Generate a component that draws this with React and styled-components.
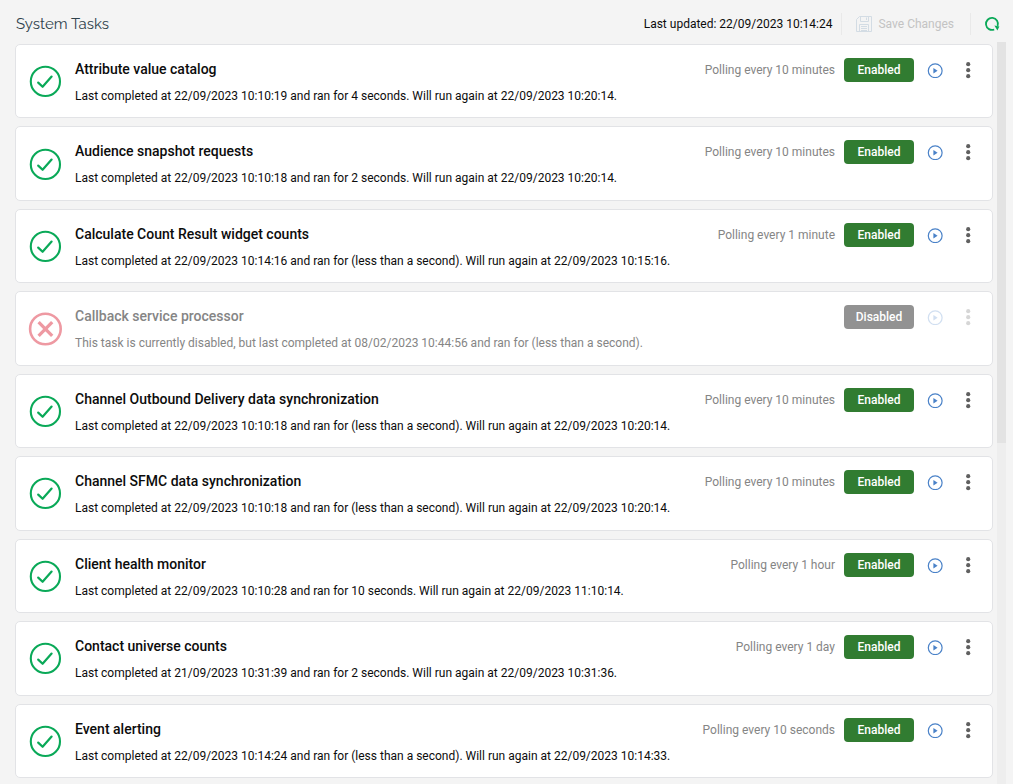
import React from "react";
import styled, { createGlobalStyle } from "styled-components";

const GlobalStyle = createGlobalStyle`
  *, *::before, *::after { box-sizing: border-box; }
  body {
    margin: 0;
    background: #f4f4f4;
    color: #0c0c0c;
    font-family: Roboto, "Liberation Sans", sans-serif;
    font-size: 12px;
  }
`;

const Page = styled.div`
  display: flex;
  flex-direction: column;
  min-height: 100vh;
`;

const Header = styled.header`
  display: flex;
  align-items: center;
  height: 42px;
  padding: 5px 13px 0 16px;
`;

const Title = styled.h1`
  flex: 1;
  margin: 0;
  color: #2f424c;
  font-family: Raleway, Lato, sans-serif;
  font-size: 15px;
  font-weight: 400;
  line-height: 20px;
`;

const Updated = styled.span`
  padding-right: 9px;
  font-size: 12px;
  line-height: 20px;
`;

const IconButton = styled.button`
  display: flex;
  align-items: center;
  justify-content: center;
  width: 16px;
  height: 24px;
  padding: 0;
  border: 0;
  background: none;
  color: ${(p) => p.$color};
  opacity: ${(p) => (p.disabled ? 0.25 : 1)};
`;

const SaveButton = styled.button`
  display: flex;
  align-items: center;
  gap: 6px;
  height: 22px;
  margin-right: 13px;
  padding: 0 16px 0 14px;
  border: solid #e9e9e9;
  border-width: 0 1px;
  background: none;
  color: #c3c3c3;
  font: 400 12px/20px Roboto, "Liberation Sans", sans-serif;
`;

const Body = styled.main`
  flex: 1;
  display: flex;
  gap: 4px;
  padding: 0 7px 0 15px;
`;

const TaskList = styled.ul`
  flex: 1;
  display: grid;
  grid-auto-rows: minmax(74px, 1fr);
  gap: 8px;
  margin: 0;
  padding: 2px 0 6px;
  list-style: none;
`;

const TaskCard = styled.li`
  display: flex;
  padding: 0 16px 0 12px;
  border: 1px solid #e2e3e6;
  border-radius: 5px;
  background: #fff;
`;

const StatusIcon = styled.svg`
  flex: none;
  align-self: center;
  width: 34px;
  height: 34px;
  margin-right: 13px;
`;

const TaskText = styled.div`
  flex: 1;
  padding-top: 15px;
  color: ${(p) => (p.$muted ? "#858585" : "#0c0c0c")};
`;

const TaskName = styled.h2`
  margin: 0 0 9px;
  font-size: 14px;
  font-weight: 500;
  line-height: 18px;
`;

const TaskDetail = styled.p`
  margin: 0;
  font-size: 12px;
  line-height: 18px;
`;

const Actions = styled.div`
  display: flex;
  align-items: center;
  height: 24px;
  margin-top: 13px;
`;

const Polling = styled.span`
  margin-right: 9px;
  color: #858585;
  font-size: 12px;
  line-height: 20px;
`;

const StateButton = styled.button`
  width: 70px;
  height: 24px;
  margin-right: 13px;
  padding: 0;
  border: 0;
  border-radius: 4px;
  background: ${(p) => (p.$on ? "#317c31" : "#929292")};
  color: #fff;
  font: 500 12px/24px Roboto, "Liberation Sans", sans-serif;
`;

const ScrollTrack = styled.div`
  width: 9px;
  background: #eeeeee;
`;

const ScrollThumb = styled.div`
  height: 54%;
  background: #e3e3e3;
`;

const tasks = [
  ["Attribute value catalog", "Last completed at 22/09/2023 10:10:19 and ran for 4 seconds. Will run again at 22/09/2023 10:20:14.", "Polling every 10 minutes"],
  ["Audience snapshot requests", "Last completed at 22/09/2023 10:10:18 and ran for 2 seconds. Will run again at 22/09/2023 10:20:14.", "Polling every 10 minutes"],
  ["Calculate Count Result widget counts", "Last completed at 22/09/2023 10:14:16 and ran for (less than a second). Will run again at 22/09/2023 10:15:16.", "Polling every 1 minute"],
  ["Callback service processor", "This task is currently disabled, but last completed at 08/02/2023 10:44:56 and ran for (less than a second).", null],
  ["Channel Outbound Delivery data synchronization", "Last completed at 22/09/2023 10:10:18 and ran for (less than a second). Will run again at 22/09/2023 10:20:14.", "Polling every 10 minutes"],
  ["Channel SFMC data synchronization", "Last completed at 22/09/2023 10:10:18 and ran for (less than a second). Will run again at 22/09/2023 10:20:14.", "Polling every 10 minutes"],
  ["Client health monitor", "Last completed at 22/09/2023 10:10:28 and ran for 10 seconds. Will run again at 22/09/2023 11:10:14.", "Polling every 1 hour"],
  ["Contact universe counts", "Last completed at 21/09/2023 10:31:39 and ran for 2 seconds. Will run again at 22/09/2023 10:31:36.", "Polling every 1 day"],
  ["Event alerting", "Last completed at 22/09/2023 10:14:24 and ran for (less than a second). Will run again at 22/09/2023 10:14:33.", "Polling every 10 seconds"],
];

function Status({ ok }) {
  return ok ? (
    <StatusIcon viewBox="0 0 34 34" fill="none" stroke="#0aa958" role="img" aria-label="Completed">
      <circle cx="17.4" cy="17.4" r="14.6" strokeWidth="2.1" />
      <path d="M10.2 18.6l4.4 4.2 9-10.2" strokeWidth="2.2" strokeLinecap="round" strokeLinejoin="round" />
    </StatusIcon>
  ) : (
    <StatusIcon viewBox="0 0 34 34" fill="none" stroke="#ee99a2" role="img" aria-label="Disabled">
      <circle cx="17.4" cy="17" r="15.3" strokeWidth="2.6" />
      <path d="M10.6 10.2l13.6 13.6M24.2 10.2L10.6 23.8" strokeWidth="3.3" />
    </StatusIcon>
  );
}

function SaveIcon() {
  return (
    <svg width="16" height="16" viewBox="0 0 16 16" fill="none" stroke="#d3dce4" aria-hidden="true">
      <path d="M3.5.5h12v15H.5v-12z" />
      <path d="M4.5.5v5h8v-5M10.5 1.5v2.5M3.5 15.5v-7h9v7M5 10.5h6M5 12.5h6M5 14.5h6" />
    </svg>
  );
}

function RefreshIcon() {
  return (
    <svg width="16" height="16" viewBox="0 0 16 16" fill="none" aria-hidden="true">
      <path d="M10.2 13.5A6 6 0 1 1 13.6 10" stroke="currentColor" strokeWidth="1.8" />
      <path d="M10.4 9.4l5 1-2 4.2z" fill="currentColor" />
    </svg>
  );
}

function PlayIcon() {
  return (
    <svg width="16" height="16" viewBox="0 0 16 16" aria-hidden="true">
      <circle cx="8.2" cy="8.7" r="6.9" fill="none" stroke="currentColor" strokeWidth="1.2" />
      <path d="M6.4 5.9v5.6l4.2-2.8z" fill="currentColor" />
    </svg>
  );
}

function MoreIcon() {
  return (
    <svg width="6" height="18" viewBox="0 0 6 18" fill="currentColor" aria-hidden="true">
      <circle cx="3.2" cy="3.2" r="2.1" />
      <circle cx="3.2" cy="9.2" r="2.1" />
      <circle cx="3.2" cy="15.2" r="2.1" />
    </svg>
  );
}

const RunButton = styled(IconButton)`
  margin-right: 17px;
`;

function Task({ name, detail, polling }) {
  const on = polling !== null;
  return (
    <TaskCard>
      <Status ok={on} />
      <TaskText $muted={!on}>
        <TaskName>{name}</TaskName>
        <TaskDetail>{detail}</TaskDetail>
      </TaskText>
      <Actions>
        {on && <Polling>{polling}</Polling>}
        <StateButton $on={on}>{on ? "Enabled" : "Disabled"}</StateButton>
        <RunButton $color="#4a82c8" disabled={!on} aria-label="Run now"><PlayIcon /></RunButton>
        <IconButton $color="#606060" disabled={!on} aria-label="More options"><MoreIcon /></IconButton>
      </Actions>
    </TaskCard>
  );
}

export default function App() {
  return (
    <Page>
      <GlobalStyle />
      <Header>
        <Title>System Tasks</Title>
        <Updated>Last updated: 22/09/2023 10:14:24</Updated>
        <SaveButton disabled><SaveIcon />Save Changes</SaveButton>
        <IconButton $color="#0aa958" aria-label="Refresh"><RefreshIcon /></IconButton>
      </Header>
      <Body>
        <TaskList>
          {tasks.map(([name, detail, polling]) => (
            <Task key={name} name={name} detail={detail} polling={polling} />
          ))}
        </TaskList>
        <ScrollTrack><ScrollThumb /></ScrollTrack>
      </Body>
    </Page>
  );
}
